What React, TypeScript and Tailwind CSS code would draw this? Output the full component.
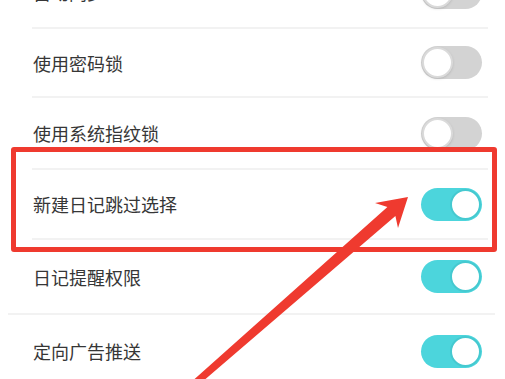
import React from 'react'

type Row = { label: string; on: boolean; h: string; badge?: boolean }

const rows: Row[] = [
  { label: '自动同步', on: false, h: 'h-[70px]', badge: true },
  { label: '使用密码锁', on: false, h: 'h-[67px]' },
  { label: '使用系统指纹锁', on: false, h: 'h-[70px]' },
  { label: '新建日记跳过选择', on: true, h: 'h-[68px]' },
  { label: '日记提醒权限', on: true, h: 'h-[73px]' },
  { label: '定向广告推送', on: true, h: 'h-[72px]' },
]

function Toggle({ on }: { on: boolean }) {
  if (on) {
    return (
      <div className="flex h-[33px] w-[61px] items-center justify-end rounded-full bg-[#4cd5dc] pr-[1px]">
        <div className="h-[31px] w-[31px] rounded-full border-2 border-[#45c9d0] bg-white" />
      </div>
    )
  }
  return (
    <div className="flex h-[33px] w-[61px] items-center rounded-full bg-[#d3d3d3] pl-[1px]">
      <div className="h-[31px] w-[31px] rounded-full border-2 border-[#dadada] bg-white shadow-sm" />
    </div>
  )
}

export default function App() {
  return (
    <div
      className="relative h-[379px] w-[505px] overflow-hidden bg-white"
      style={{ fontFamily: '"Noto Sans CJK SC", "Noto Sans", sans-serif' }}
    >
      <div className="-mt-[43px] flex flex-col">
        {rows.map((row, i) => (
          <div key={row.label} className="flex flex-col">
            {i > 0 && (
              <div
                className={
                  i === 5
                    ? 'ml-[8px] mr-[10px] h-[2px] bg-[#f2f2f2]'
                    : 'ml-[32px] mr-[17px] h-[2px] bg-[#f2f2f2]'
                }
              />
            )}
            <div className={`flex items-center justify-between pl-[33px] pr-[23px] ${row.h}`}>
              <div className="flex items-center gap-[6px]">
                <span className="text-[18px] leading-none text-[#363636]">{row.label}</span>
                {row.badge && <span className="h-[14px] w-[14px] rounded-full bg-[#5ad8d8]" />}
              </div>
              <Toggle on={row.on} />
            </div>
          </div>
        ))}
      </div>

      {/* highlight box */}
      <div className="absolute left-[11px] top-[147px] h-[105px] w-[486px] rounded-[3px] border-[5px] border-[#ef3a2f]" />

      {/* arrow */}
      <svg className="absolute left-0 top-0" width="505" height="379" viewBox="0 0 505 379">
        <polygon
          fill="#ef3a2f"
          points="408,197 398,228 395.4,216 191.9,390.7 187.3,385.5 387.4,207 375,203"
        />
      </svg>
    </div>
  )
}
